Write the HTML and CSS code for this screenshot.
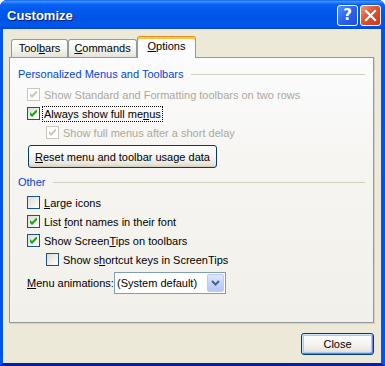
FILE: index.html
```html
<!DOCTYPE html>
<html lang="en">
<head>
  <meta charset="UTF-8" />
  <title>Customize</title>
  <link rel="stylesheet" href="styles.css">
</head>
<body>
  <div class="window">
    <div class="titlebar">
      <span class="title">Customize</span>
      <div class="caption-btns">
        <button class="cap-btn help">?</button>
        <button class="cap-btn close">
          <svg width="13" height="13" viewBox="0 0 13 13"><path d="M2 2 L11 11 M11 2 L2 11" stroke="#fff" stroke-width="2.2" stroke-linecap="square"/></svg>
        </button>
      </div>
    </div>

    <div class="frame">
      <div class="tabs">
        <div class="tab tab-toolbars">Tool<u>b</u>ars</div>
        <div class="tab tab-commands"><u>C</u>ommands</div>
        <div class="tab tab-options active"><u>O</u>ptions</div>
      </div>

      <div class="panel">
        <div class="group-title">Personalized Menus and Toolbars</div>

        <div class="check-row disabled">
          <span class="box checked"></span>
          <span class="label">Show Standard and Formatting toolbars on two rows</span>
        </div>
        <div class="check-row">
          <span class="box checked"></span>
          <span class="label focus">Always show full me<u>n</u>us</span>
        </div>
        <div class="check-row indent disabled">
          <span class="box checked"></span>
          <span class="label">Show full menus after a short delay</span>
        </div>

        <button class="xp-btn reset"><u>R</u>eset menu and toolbar usage data</button>

        <div class="group-title other">Other</div>

        <div class="check-row">
          <span class="box"></span>
          <span class="label"><u>L</u>arge icons</span>
        </div>
        <div class="check-row">
          <span class="box checked"></span>
          <span class="label">List <u>f</u>ont names in their font</span>
        </div>
        <div class="check-row">
          <span class="box checked"></span>
          <span class="label">Show Screen<u>T</u>ips on toolbars</span>
        </div>
        <div class="check-row indent">
          <span class="box"></span>
          <span class="label">Show s<u>h</u>ortcut keys in ScreenTips</span>
        </div>

        <div class="combo-row">
          <span class="combo-label"><u>M</u>enu animations:</span>
          <div class="combo">
            <span class="combo-text">(System default)</span>
            <span class="combo-arrow">
              <svg width="9" height="6" viewBox="0 0 9 6"><path d="M1 1 L4.5 4.5 L8 1" fill="none" stroke="#4d6185" stroke-width="2"/></svg>
            </span>
          </div>
        </div>
      </div>

      <div class="footer">
        <button class="xp-btn default">Close</button>
      </div>
    </div>
  </div>
</body>
</html>
```

FILE: styles.css
```css
html, body {
  margin: 0;
  padding: 0;
}
body {
  font-family: "Liberation Sans", Arial, sans-serif;
  font-size: 11px;
  color: #000;
  background: #fff;
}
u {
  text-decoration: underline;
  text-underline-offset: 1px;
}
.window {
  width: 385px;
  height: 366px;
  display: flex;
  flex-direction: column;
  border-radius: 7px 7px 0 0;
  overflow: hidden;
  background: #0831d9;
}
.titlebar {
  height: 29px;
  flex: none;
  display: flex;
  align-items: flex-start;
  justify-content: space-between;
  padding: 5px 4px 0 7px;
  box-sizing: border-box;
  background: linear-gradient(#0a5dff 0%, #3d95ff 5%, #0a62f5 15%, #0058ee 35%, #0054e3 70%, #0058ee 88%, #0046d8 100%);
}
.title {
  color: #fff;
  font-weight: bold;
  font-size: 13px;
  line-height: 21px;
  text-shadow: 1px 1px 0 #0a1883;
}
.caption-btns {
  display: flex;
  gap: 2px;
}
.cap-btn {
  width: 21px;
  height: 21px;
  box-sizing: border-box;
  border: 1px solid #fff;
  border-radius: 3px;
  padding: 0;
  margin: 0;
  display: flex;
  align-items: center;
  justify-content: center;
  color: #fff;
}
.cap-btn.help {
  background: linear-gradient(135deg, #5a8ffb, #2a63ef 50%, #1c4fd8);
  font-family: "DejaVu Sans", sans-serif;
  font-weight: bold;
  font-size: 15px;
  line-height: 1;
}
.cap-btn.close {
  background: linear-gradient(135deg, #f0967a, #e0532f 45%, #c63a1a);
}
.frame {
  flex: 1;
  display: flex;
  flex-direction: column;
  background: #ece9d8;
  border-left: 3px solid #0055ea;
  border-right: 4px solid #0055ea;
  border-bottom: 3px solid #0022a8;
  padding: 7px 7px 0 6px;
}
.tabs {
  display: flex;
  align-items: flex-end;
  height: 21px;
  padding-left: 2px;
  position: relative;
  z-index: 1;
}
.tab {
  height: 18px;
  box-sizing: border-box;
  text-align: center;
  line-height: 17px;
  border: 1px solid #919b9c;
  border-bottom: none;
  border-radius: 3px 3px 0 0;
  background: linear-gradient(#ffffff, #f3f3ef 60%, #e3e2da);
}
.tab-toolbars {
  width: 57px;
}
.tab-commands {
  width: 69px;
}
.tab-options {
  width: 59px;
}
.tab.active {
  height: 22px;
  margin-bottom: -1px;
  line-height: 19px;
  background: #fcfcfe;
  border-top: 1px solid #e68b2c;
  box-shadow: inset 0 2px 0 #ffc73c;
}
.panel {
  height: 266px;
  flex: none;
  box-sizing: border-box;
  border: 1px solid #919b9c;
  box-shadow: 1px 1px 0 #d5d2c5;
  background: linear-gradient(#fcfcfe, #f6f5f1 40%, #f1f0ea);
  padding: 10px 8px 0 8px;
}
.group-title {
  display: flex;
  align-items: center;
  height: 13px;
  line-height: 13px;
  color: #0046d5;
  margin-bottom: 4px;
}
.group-title::after {
  content: "";
  flex: 1;
  height: 1px;
  background: #d0d0bf;
  margin-left: 7px;
}
.group-title.other {
  margin-top: 8px;
}
.check-row {
  height: 19px;
  display: flex;
  align-items: center;
  margin-left: 9px;
}
.check-row.indent {
  margin-left: 28px;
}
.box {
  width: 13px;
  height: 13px;
  box-sizing: border-box;
  border: 1px solid #1c5180;
  background: linear-gradient(135deg, #dcdcd7, #f5f4f0 70%, #fff);
  position: relative;
  flex: none;
}
.box.checked::after {
  content: "";
  position: absolute;
  left: 2px;
  top: 2px;
  width: 7px;
  height: 7px;
  background: url("data:image/svg+xml;utf8,<svg xmlns='http://www.w3.org/2000/svg' width='7' height='7' viewBox='0 0 7 7'><path d='M0 2 L2 4 L6 0 L7 0 L7 2 L2 7 L0 5 Z' fill='%2321a121'/></svg>") no-repeat;
}
.label {
  margin-left: 2px;
  padding: 0 1px;
  border: 1px dotted transparent;
  line-height: 14px;
  white-space: nowrap;
}
.label.focus {
  border-color: #000;
}
.disabled .label {
  color: #aca899;
}
.disabled .box {
  border-color: #cac8bb;
  background: #fff;
}
.disabled .box.checked::after {
  background: url("data:image/svg+xml;utf8,<svg xmlns='http://www.w3.org/2000/svg' width='7' height='7' viewBox='0 0 7 7'><path d='M0 2 L2 4 L6 0 L7 0 L7 2 L2 7 L0 5 Z' fill='%23cac8bb'/></svg>") no-repeat;
}
.xp-btn {
  font-family: inherit;
  font-size: 11px;
  color: #000;
  height: 23px;
  box-sizing: border-box;
  padding: 0;
  border: 1px solid #003c74;
  border-radius: 3px;
  background: linear-gradient(#ffffff, #f4f3ee 55%, #e8e6dc 85%, #d6d0c5);
  box-shadow: inset 0 -1px 0 #d6d0c5;
}
.xp-btn.reset {
  display: block;
  width: 189px;
  margin: 3px 0 0 10px;
}
.xp-btn.default {
  width: 73px;
  height: 22px;
  box-shadow: inset 1px 1px 0 #cee7ff, inset -1px -1px 0 #6982ee, inset 0 0 0 2px #adc6f5;
}
.combo-row {
  display: flex;
  align-items: center;
  margin: 3px 0 0 9px;
}
.combo-label {
  width: 87px;
  white-space: nowrap;
}
.combo {
  width: 112px;
  height: 22px;
  box-sizing: border-box;
  border: 1px solid #7f9db9;
  background: #fff;
  display: flex;
  align-items: center;
  justify-content: space-between;
  padding: 0 1px 0 2px;
}
.combo-arrow {
  width: 17px;
  height: 18px;
  box-sizing: border-box;
  border: 1px solid #bccbf5;
  border-radius: 2px;
  background: linear-gradient(#dfe8fd, #c1d3fb 60%, #b4c8f6);
  display: flex;
  align-items: center;
  justify-content: center;
}
.footer {
  display: flex;
  justify-content: flex-end;
  margin-top: 10px;
}
```
